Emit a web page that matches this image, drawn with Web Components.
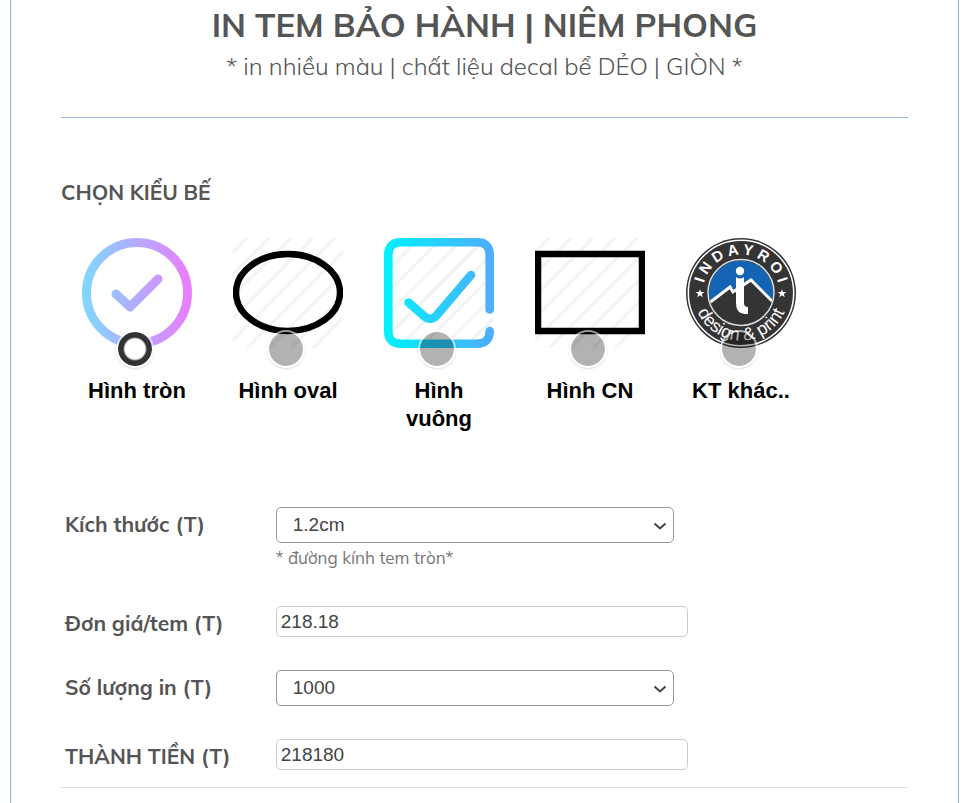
<!DOCTYPE html>
<html lang="vi">
<head>
<meta charset="utf-8">
<meta name="viewport" content="width=device-width, initial-scale=1">
<title>In tem bảo hành</title>
<style>
  body {
    margin: 0;
    background: #fff;
    color: #555;
    font-family: Mulish, Muli, Lato, "Liberation Sans", sans-serif;
  }
</style>
</head>
<body>
<order-page>
  <page-header slot="header">
    <span slot="title">IN TEM BẢO HÀNH | NIÊM PHONG</span>
    <span slot="subtitle">* in nhiều màu | chất liệu decal bể DẺO | GIÒN *</span>
  </page-header>
  <shape-picker heading="CHỌN KIỂU BẾ"></shape-picker>
  <order-form>
    <order-field label="Kích thước (T)" type="select" value="1.2cm" options="1.2cm,1.5cm,2cm,2.5cm,3cm">* đường kính tem tròn*</order-field>
    <order-field label="Đơn giá/tem (T)" type="text" value="218.18"></order-field>
    <order-field label="Số lượng in (T)" type="select" value="1000" options="1000,2000,3000,5000"></order-field>
    <order-field label="THÀNH TIỀN (T)" type="text" value="218180"></order-field>
  </order-form>
</order-page>

<script>
class OrderPage extends HTMLElement {
  constructor() {
    super();
    this.attachShadow({ mode: "open" });
  }

  connectedCallback() {
    this.shadowRoot.innerHTML = `
    <style>
    :host {
      display: block;
      box-sizing: border-box;
      min-height: 100vh;
      margin: 0 9px 0 10px;
      padding: 0 50px;
      border: solid #93b7d3;
      border-width: 0 1px;
    }
    </style>
    <slot name="header"></slot>
    <main><slot></slot></main>
    `;
  }
}

class PageHeader extends HTMLElement {
  constructor() {
    super();
    this.attachShadow({ mode: "open" });
  }

  connectedCallback() {
    this.shadowRoot.innerHTML = `
    <style>
    :host {
      display: block;
      padding: 3px 0 32px;
      border-bottom: 1px solid #97b5cf;
      text-align: center;
    }
    h1 {
      margin: 0;
      font-size: 33px;
      line-height: 44px;
      font-weight: 700;
    }
    p {
      margin: 0;
      font-size: 24px;
      line-height: 38px;
      font-weight: 300;
      color: #555;
    }
    </style>
    <h1><slot name="title"></slot></h1>
    <p><slot name="subtitle"></slot></p>
    `;
  }
}

// faint diagonal lines behind the shape samples
const HATCH = `
  <g stroke="#f3f3f3" stroke-width="3">
    <path d="M0 14 14 0M0 36 36 0M0 58 58 0M0 80 80 0M0 102 102 0M14 110 110 14M36 110 110 36M58 110 110 58M80 110 110 80"/>
  </g>`;

const SHAPES = {
  circle: `
    <defs>
      <linearGradient id="g" gradientUnits="userSpaceOnUse" x1="0" y1="0" x2="110" y2="0">
        <stop offset="0" stop-color="#7ed9ff"/><stop offset="1" stop-color="#ec7cff"/>
      </linearGradient>
    </defs>
    <g fill="none" stroke="url(#g)" stroke-width="9" stroke-linecap="round" stroke-linejoin="round">
      <circle cx="55" cy="55" r="50.5"/>
      <path d="M34 56 48 69 76 41"/>
    </g>`,
  oval: HATCH + `
    <ellipse cx="55" cy="54.5" rx="52" ry="38.5" fill="none" stroke="#000" stroke-width="6.5"/>`,
  square: HATCH + `
    <defs>
      <linearGradient id="g" gradientUnits="userSpaceOnUse" x1="0" y1="0" x2="110" y2="0">
        <stop offset="0" stop-color="#00f2fe"/><stop offset="1" stop-color="#4facfe"/>
      </linearGradient>
    </defs>
    <g fill="none" stroke="url(#g)" stroke-width="8.6" stroke-linecap="round" stroke-linejoin="round">
      <path d="M105.7 71.5V17Q105.7 4.3 93 4.3H17Q4.3 4.3 4.3 17V93Q4.3 105.7 17 105.7H93Q105.7 105.7 105.7 93"/>
      <path d="M24.5 64.5 40 78Q47 84 53 77L87 37"/>
    </g>`,
  rect: HATCH + `
    <rect x="3" y="16" width="104" height="77" fill="none" stroke="#000" stroke-width="6.5"/>`,
  badge: `
    <defs>
      <path id="top" d="M16.5 55A38.5 38.5 0 0 1 93.5 55"/>
      <path id="bottom" d="M7.5 55A47.5 47.5 0 0 0 102.5 55"/>
      <clipPath id="disc"><circle cx="55" cy="54.5" r="32"/></clipPath>
    </defs>
    <circle cx="55" cy="55" r="55" fill="#353435"/>
    <circle cx="55" cy="55" r="52.7" fill="none" stroke="#fff" stroke-width="1.5"/>
    <g clip-path="url(#disc)">
      <path fill="#1464b3" d="M20 20H90V80H20Z"/>
      <path fill="#353435" stroke="#fff" stroke-width="3" d="M18 69 44 49 47 54 65 42 71 48 92 69 92 95H18Z"/>
    </g>
    <circle cx="55" cy="54.5" r="33" fill="none" stroke="#ddd" stroke-width="1.5"/>
    <circle cx="54" cy="33" r="4.2" fill="#fff"/>
    <path fill="#fff" d="M50 39Q54 42 58 39V65Q58 69 62 69V76H59Q50 76 50 65Z"/>
    <path fill="#fff" d="m14 51 1 3h3.5l-2.7 2 1 3.2-2.8-2-2.8 2 1-3.2-2.7-2H13zM96 51l1 3h3.5l-2.7 2 1 3.2-2.8-2-2.8 2 1-3.2-2.7-2H95z"/>
    <g fill="#fff" font-family="Liberation Sans, sans-serif" text-anchor="middle">
      <text font-size="15" font-weight="700"><textPath href="#top" startOffset="50%">I N D A Y R O I</textPath></text>
      <text font-size="18" font-weight="400"><textPath href="#bottom" startOffset="50%">design &amp; print</textPath></text>
    </g>`
};

class ShapeOption extends HTMLElement {
  constructor() {
    super();
    this.attachShadow({ mode: "open" });
  }

  connectedCallback() {
    this.render();
    this.input = this.shadowRoot.querySelector("input");
    this.input.addEventListener("change", () => {
      this.dispatchEvent(new CustomEvent("pick", { bubbles: true, composed: true }));
    });
  }

  render() {
    this.shadowRoot.innerHTML = `
    <style>
    :host {
      display: block;
    }
    label {
      display: flex;
      flex-direction: column;
      align-items: center;
      color: #000;
      font: 700 22px/28px "Liberation Sans", Arial, sans-serif;
      text-align: center;
      cursor: pointer;
    }
    svg {
      display: block;
      width: 110px;
      height: 110px;
    }
    input {
      appearance: none;
      box-sizing: border-box;
      width: 38px;
      height: 38px;
      margin: -18px 4px 9px 0;
      border: 2px solid rgba(255, 255, 255, 0.6);
      border-radius: 50%;
      background: rgba(0, 0, 0, 0.3);
      background-clip: padding-box;
      box-shadow: 0 1px 2px rgba(0, 0, 0, 0.15);
      cursor: pointer;
    }
    input:checked {
      background: radial-gradient(circle, #fff 10px, #333 12px);
      background-clip: padding-box;
    }
    </style>
    <label>
      <svg viewBox="0 0 110 110" aria-hidden="true">${SHAPES[this.getAttribute("shape")]}</svg>
      <input type="radio" name="shape" ${this.hasAttribute("checked") ? "checked" : ""}>
      <span><slot></slot></span>
    </label>
    `;
  }
}

class ShapePicker extends HTMLElement {
  constructor() {
    super();
    this.attachShadow({ mode: "open" });
  }

  connectedCallback() {
    this.shadowRoot.innerHTML = `
    <style>
    :host {
      display: block;
      padding-top: 59px;
    }
    h2 {
      margin: 0;
      font-size: 21px;
      line-height: 30px;
      font-weight: 700;
    }
    .options {
      display: grid;
      grid-template-columns: repeat(auto-fill, 110px);
      gap: 24px 41px;
      padding: 31px 21px 0;
    }
    </style>
    <h2>${this.getAttribute("heading")}</h2>
    <div class="options" role="radiogroup" aria-label="${this.getAttribute("heading")}">
      <shape-option shape="circle" checked>Hình tròn</shape-option>
      <shape-option shape="oval">Hình oval</shape-option>
      <shape-option shape="square">Hình vuông</shape-option>
      <shape-option shape="rect">Hình CN</shape-option>
      <shape-option shape="badge">KT khác..</shape-option>
    </div>
    `;
    // radios sit in separate shadow roots, so the group is kept in sync here
    this.shadowRoot.addEventListener("pick", (e) => {
      this.shadowRoot.querySelectorAll("shape-option").forEach((option) => {
        option.input.checked = option === e.target;
      });
    });
  }
}

class OrderForm extends HTMLElement {
  constructor() {
    super();
    this.attachShadow({ mode: "open" });
  }

  connectedCallback() {
    this.shadowRoot.innerHTML = `
    <style>
    :host {
      display: block;
      margin-top: 74px;
      padding-bottom: 17px;
      border-bottom: 1px solid #e0e0e0;
    }
    form {
      display: flex;
      flex-direction: column;
      gap: 33px;
      padding-left: 4px;
    }
    </style>
    <form><slot></slot></form>
    `;
  }
}

class OrderField extends HTMLElement {
  constructor() {
    super();
    this.attachShadow({ mode: "open" });
  }

  connectedCallback() {
    this.render();
  }

  control() {
    const value = this.getAttribute("value");
    if (this.getAttribute("type") === "select") {
      const options = this.getAttribute("options").split(",");
      return `
      <div class="select">
        <select id="control">${options
          .map((o) => `<option${o === value ? " selected" : ""}>${o}</option>`)
          .join("")}</select>
        <svg viewBox="0 0 14 8" aria-hidden="true"><path d="M1.5 1.5 7 6.5 12.5 1.5"/></svg>
      </div>`;
    }
    return `<input id="control" type="text" value="${value}">`;
  }

  render() {
    const hint = this.textContent.trim() ? "<small><slot></slot></small>" : "";
    this.shadowRoot.innerHTML = `
    <style>
    :host {
      display: grid;
      grid-template-columns: 1fr 3fr;
      align-items: start;
    }
    label {
      padding-top: 3px;
      font-size: 21px;
      line-height: 28px;
      font-weight: 700;
    }
    select, input {
      display: block;
      box-sizing: border-box;
      width: 100%;
      border-radius: 5px;
      background: #fff;
      color: #444;
      font: 19px "Liberation Sans", Arial, sans-serif;
    }
    .select {
      position: relative;
      max-width: 398px;
    }
    select {
      appearance: none;
      height: 36px;
      padding: 0 28px 2px 16px;
      border: 1px solid #999;
    }
    svg {
      position: absolute;
      top: 15px;
      right: 7px;
      width: 14px;
      height: 8px;
      fill: none;
      stroke: #444;
      stroke-width: 2;
      pointer-events: none;
    }
    input {
      max-width: 412px;
      height: 31px;
      padding: 0 4px;
      border: 1px solid #ccc;
    }
    small {
      display: block;
      font-size: 17px;
      line-height: 30px;
      color: #777;
    }
    </style>
    <label for="control">${this.getAttribute("label")}</label>
    <div>${this.control()}${hint}</div>
    `;
  }
}

customElements.define("order-page", OrderPage);
customElements.define("page-header", PageHeader);
customElements.define("shape-option", ShapeOption);
customElements.define("shape-picker", ShapePicker);
customElements.define("order-form", OrderForm);
customElements.define("order-field", OrderField);
</script>
</body>
</html>
